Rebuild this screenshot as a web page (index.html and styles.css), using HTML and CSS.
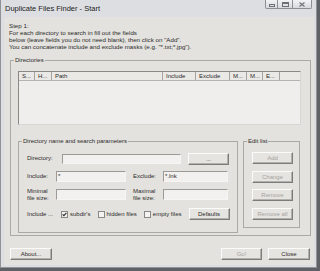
FILE: index.html
```html
<!DOCTYPE html>
<html lang="en">
<head>
    <meta charset="UTF-8">
    <meta name="viewport" content="width=device-width, initial-scale=1.0">
    <link rel="stylesheet" href="styles.css">
</head>
<body>
    <div class="window">
        <div class="titlebar">
            <span class="title">Duplicate Files Finder - Start</span>
            <div class="caption">
                <span class="cap-btn min">
                    <svg width="6" height="3" viewBox="0 0 6 3"><rect x="0.5" y="0.5" width="5" height="2" fill="none" stroke="#6d7177"/></svg>
                </span>
                <span class="cap-btn max">
                    <svg width="7" height="5" viewBox="0 0 7 5"><rect x="0.5" y="0.5" width="6" height="4" fill="none" stroke="#6d7177"/><line x1="1" y1="1.5" x2="6" y2="1.5" stroke="#6d7177"/></svg>
                </span>
                <span class="cap-btn close">
                    <svg width="6" height="5" viewBox="0 0 6 5"><path d="M0.5 0.5 L5.5 4.5 M5.5 0.5 L0.5 4.5" stroke="#6d7177" stroke-width="1.1" fill="none"/></svg>
                </span>
            </div>
        </div>

        <div class="client">
            <div class="intro">
                Step 1:<br>
                For each directory to search in fill out the fields<br>
                below (leave fields you do not need blank), then click on "Add".<br>
                You can concatenate include and exclude masks (e.g. "*.txt;*.jpg").
            </div>

            <fieldset class="group dirs">
                <legend>Directories</legend>
                <div class="dirs-body">
                    <div class="listview">
                        <div class="list-head">
                            <span class="col" style="width:16px">S...</span>
                            <span class="col" style="width:17px">H...</span>
                            <span class="col" style="width:111px">Path</span>
                            <span class="col" style="width:33px">Include</span>
                            <span class="col" style="width:34px">Exclude</span>
                            <span class="col" style="width:17px">M...</span>
                            <span class="col" style="width:16px">M...</span>
                            <span class="col" style="width:17px">E...</span>
                        </div>
                    </div>

                    <div class="lower">
                        <fieldset class="group params">
                            <legend>Directory name and search parameters</legend>
                            <div class="params-body">
                                <div class="row">
                                    <span class="lbl dir-lbl">Directory:</span>
                                    <span class="field dir-field"></span>
                                    <button class="btn browse">...</button>
                                </div>
                                <div class="row">
                                    <span class="lbl short">Include:</span>
                                    <span class="field half">*</span>
                                    <span class="lbl right-lbl">Exclude:</span>
                                    <span class="field half2">*.lnk</span>
                                </div>
                                <div class="row">
                                    <span class="lbl short">Minimal<br>file size:</span>
                                    <span class="field half"></span>
                                    <span class="lbl right-lbl">Maximal<br>file size:</span>
                                    <span class="field half2"></span>
                                </div>
                                <div class="row checks">
                                    <span class="lbl inc-lbl">Include ...</span>
                                    <span class="check">
                                        <span class="box">
                                            <svg width="5" height="5" viewBox="0 0 5 5"><path d="M0.6 2.3 L1.9 3.7 L4.4 0.8" stroke="#2a2a2a" stroke-width="1.1" fill="none"/></svg>
                                        </span>
                                        subdir's
                                    </span>
                                    <span class="check"><span class="box"></span>hidden files</span>
                                    <span class="check"><span class="box"></span>empty files</span>
                                    <button class="btn defaults">Defaults</button>
                                </div>
                            </div>
                        </fieldset>

                        <fieldset class="group edit">
                            <legend>Edit list</legend>
                            <div class="edit-body">
                                <button class="btn off">Add</button>
                                <button class="btn off">Change</button>
                                <button class="btn off">Remove</button>
                                <button class="btn off">Remove all</button>
                            </div>
                        </fieldset>
                    </div>
                </div>
            </fieldset>

            <div class="bottom">
                <button class="btn about">About...</button>
                <button class="btn off go">Go!</button>
                <button class="btn close-btn">Close</button>
            </div>
        </div>
    </div>
</body>
</html>
```

FILE: styles.css
```css
body {
    margin: 0;
    background: #5e6266;
    font-family: "Liberation Sans", Arial, sans-serif;
    font-size: 6px;
    color: #2a2a2a;
}
.window {
    width: 317px;
    height: 268px;
    box-sizing: border-box;
    padding: 0 2px 2px 3px;
    border: 1px solid #8f9398;
    border-top: none;
    background: #dcdee1;
    display: flex;
    flex-direction: column;
}
.titlebar {
    height: 17px;
    flex: none;
    display: flex;
    justify-content: space-between;
    align-items: flex-start;
}
.title {
    font-size: 7.5px;
    line-height: 8px;
    margin: 5px 0 0 1px;
    color: #1c1c1c;
}
.caption {
    display: flex;
    margin-right: 2px;
}
.cap-btn {
    height: 9px;
    box-sizing: border-box;
    border: 1px solid #8c9095;
    border-top: none;
    background: linear-gradient(#f2f3f5, #d6d9dd);
    display: flex;
    align-items: center;
    justify-content: center;
}
.cap-btn + .cap-btn {
    border-left: none;
}
.cap-btn.min {
    width: 13px;
    border-bottom-left-radius: 2px;
    align-items: flex-end;
    padding-bottom: 1px;
}
.cap-btn.max {
    width: 15px;
}
.cap-btn.close {
    width: 19px;
    border-bottom-right-radius: 2px;
}
.cap-btn svg {
    display: block;
}
.client {
    flex: 1;
    background: #e4e2de;
    display: flex;
    flex-direction: column;
}
.intro {
    padding: 4.5px 0 0 5px;
    line-height: 7px;
    font-size: 6.2px;
}
.group {
    margin: 0;
    padding: 0;
    border: 1px solid #aba9a4;
    min-inline-size: 0;
}
.group legend {
    padding: 0 1px;
    margin-left: 3px;
    line-height: 7px;
}
.dirs {
    margin: 7px 3px 0 6px;
}
.dirs-body {
    padding: 7.5px 9px 2px 7px;
}
.listview {
    width: 283px;
    height: 54px;
    box-sizing: border-box;
    border: 1px solid;
    border-color: #8b8985 #d9d7d3 #d9d7d3 #8b8985;
    background: #efeeec;
}
.list-head {
    display: flex;
    height: 9px;
    box-sizing: border-box;
    border-bottom: 1px solid #b6b4b0;
    background: #ebe9e6;
}
.col {
    box-sizing: border-box;
    border-right: 1px solid #a6a4a0;
    padding-left: 3px;
    line-height: 8px;
    white-space: nowrap;
    overflow: hidden;
}
.lower {
    display: flex;
    align-items: flex-start;
    gap: 5px;
    margin-top: 13px;
}
.params {
    width: 220px;
    box-sizing: border-box;
}
.params-body {
    padding: 7.5px 8px 12px 8px;
    display: flex;
    flex-direction: column;
    gap: 6px;
}
.row {
    display: flex;
    align-items: center;
    height: 12px;
}
.row.checks {
    margin-top: 1.5px;
}
.lbl {
    line-height: 7px;
    flex: none;
    white-space: nowrap;
}
.dir-lbl {
    width: 35px;
}
.short {
    width: 29px;
}
.right-lbl {
    width: 30px;
    margin-left: 7px;
}
.inc-lbl {
    width: 34px;
}
.field {
    height: 11px;
    box-sizing: border-box;
    border: 1px solid;
    border-color: #9c9a96 #f6f5f3 #f6f5f3 #9c9a96;
    background: #f2f1ef;
    padding-left: 1px;
    line-height: 9px;
    flex: none;
}
.dir-field {
    width: 119px;
    height: 10px;
}
.half {
    width: 70px;
}
.half2 {
    width: 65px;
}
.btn {
    height: 12px;
    box-sizing: border-box;
    border: 1px solid;
    border-color: #fbfbfa #7e7c79 #7e7c79 #fbfbfa;
    box-shadow: inset -1px -1px 0 #b3b1ad;
    background: #e6e4e0;
    font: inherit;
    color: #2a2a2a;
    padding: 0;
    line-height: 10px;
    flex: none;
}
.btn.off {
    color: #a4a29e;
}
.browse {
    width: 41px;
    margin-left: 7px;
}
.check {
    display: flex;
    align-items: center;
    gap: 2px;
    margin-right: 7px;
    white-space: nowrap;
}
.box {
    width: 7px;
    height: 7px;
    box-sizing: border-box;
    border: 1px solid #8a8884;
    background: #f4f3f1;
    display: flex;
    align-items: center;
    justify-content: center;
}
.box svg {
    display: block;
}
.defaults {
    width: 41px;
    margin-left: auto;
}
.edit {
    width: 57px;
    box-sizing: border-box;
}
.edit-body {
    padding: 7px 6px 7.5px 8px;
    display: flex;
    flex-direction: column;
    gap: 6.5px;
}
.edit-body .btn {
    width: 41px;
}
.bottom {
    display: flex;
    gap: 6px;
    margin: 12px 4px 0 6px;
}
.about {
    width: 42px;
    margin-right: auto;
}
.go {
    width: 41px;
}
.close-btn {
    width: 42px;
}
```
